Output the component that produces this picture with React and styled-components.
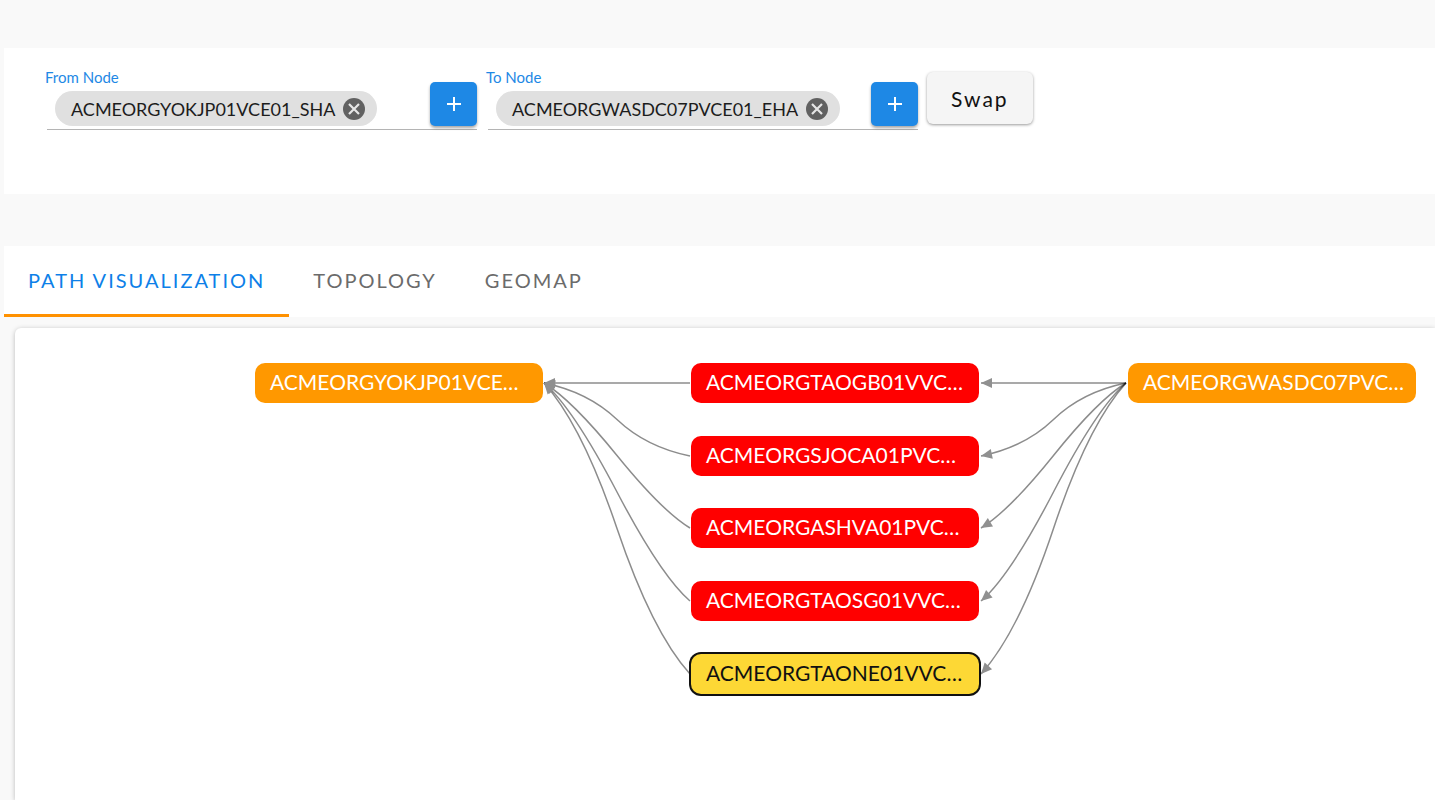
import React from "react";
import styled, { createGlobalStyle } from "styled-components";

const GlobalStyle = createGlobalStyle`
  * {
    box-sizing: border-box;
  }
  body {
    margin: 0;
    background: #f9f9f9;
    color: #1c1c1c;
    font-family: Lato, "Open Sans", sans-serif;
  }
  button,
  input {
    font-family: inherit;
  }
`;

const Page = styled.main`
  display: flex;
  flex-direction: column;
  min-height: 100vh;
  padding: 48px 0 0 4px;
  overflow: hidden;
`;

const SearchBar = styled.form`
  display: flex;
  align-items: flex-start;
  gap: 9px;
  min-height: 146px;
  margin-bottom: 52px;
  padding: 20px 41px;
  background: #fff;
`;

const Field = styled.div`
  flex: 0 1 432px;
  min-width: 0;
`;

const Label = styled.label`
  display: block;
  height: 14px;
  font-size: 15px;
  line-height: 18px;
  color: #1e88e5;
`;

const Control = styled.div`
  display: flex;
  align-items: flex-end;
  height: 48px;
  margin-left: 2px;
  padding: 0 0 3px 8px;
  border-bottom: 1px solid #b4b4b4;
`;

const Chip = styled.span`
  display: flex;
  align-items: center;
  gap: 8px;
  flex: none;
  height: 35px;
  padding: 0 12px 0 16px;
  border-radius: 18px;
  background: #e0e0e0;
  font-size: 18px;
  line-height: 24px;
`;

const ClearButton = styled.button`
  display: flex;
  padding: 0;
  border: 0;
  background: none;
  cursor: pointer;
`;

const NodeInput = styled.input`
  flex: 1;
  min-width: 0;
  height: 35px;
  border: 0;
  outline: 0;
  background: none;
  font-size: 18px;
`;

const AddButton = styled.button`
  display: flex;
  align-items: center;
  justify-content: center;
  flex: none;
  width: 47px;
  height: 44px;
  padding: 0;
  border: 0;
  border-radius: 5px;
  background: #1e88e5;
  box-shadow: 0 2px 3px rgba(0, 0, 0, 0.35);
  cursor: pointer;
`;

const SwapButton = styled.button`
  flex: none;
  height: 52px;
  margin-top: 4px;
  padding: 0 24px;
  border: 0;
  border-radius: 6px;
  background: #f5f5f5;
  box-shadow: 0 1px 3px rgba(0, 0, 0, 0.4);
  color: #111;
  font-size: 21px;
  letter-spacing: 2px;
  cursor: pointer;
`;

const Tabs = styled.nav`
  display: flex;
  height: 71px;
  background: #fff;
`;

const Tab = styled.button`
  padding: 0 24px;
  border: 0;
  border-bottom: 3px solid ${(props) => (props.$active ? "#ff9100" : "transparent")};
  background: none;
  color: ${(props) => (props.$active ? "#0d80e8" : "#6b6b6b")};
  font-size: 20px;
  letter-spacing: 2px;
  cursor: pointer;
`;

const Canvas = styled.section`
  position: relative;
  flex: 1;
  min-height: 400px;
  margin: 11px 0 0 11px;
  border-radius: 6px 0 0 0;
  background: #fff;
  box-shadow: 0 1px 5px rgba(0, 0, 0, 0.25);
  overflow: hidden;
`;

const Edges = styled.svg`
  position: absolute;
  top: 0;
  left: 0;
  width: 100%;
  height: 100%;
`;

const GraphNode = styled.div`
  position: absolute;
  top: ${(props) => props.$y}px;
  left: ${(props) => props.$x}px;
  width: 288px;
  height: 40px;
  padding: 0 15px;
  border-radius: 10px;
  background: ${(props) => props.$fill};
  box-shadow: ${(props) => (props.$selected ? "0 0 0 2px #111" : "none")};
  color: ${(props) => (props.$selected ? "#111" : "#fff")};
  font-size: 21px;
  line-height: 38px;
  white-space: nowrap;
`;

const ORANGE = "#ff9800";
const RED = "#ff0000";
const YELLOW = "#fdd835";

const ends = [
  { name: "ACMEORGYOKJP01VCE…", x: 240, y: 35, fill: ORANGE },
  { name: "ACMEORGWASDC07PVC…", x: 1113, y: 35, fill: ORANGE },
];

// bend is the offset of the curve's control points from each end
const hops = [
  { name: "ACMEORGTAOGB01VVC…", x: 676, y: 35, fill: RED, bend: [36, 0] },
  { name: "ACMEORGSJOCA01PVC…", x: 676, y: 108, fill: RED, bend: [44, 9] },
  { name: "ACMEORGASHVA01PVC…", x: 676, y: 180, fill: RED, bend: [28, 17] },
  { name: "ACMEORGTAOSG01VVC…", x: 676, y: 253, fill: RED, bend: [29, 25] },
  {
    name: "ACMEORGTAONE01VVC…",
    x: 676,
    y: 326,
    fill: YELLOW,
    bend: [38, 42],
    selected: true,
  },
];

function makeEdge(from, to, [bx, by]) {
  const dir = Math.sign(to.y - from.y);
  const mid = { x: (from.x + to.x) / 2, y: (from.y + to.y) / 2 };
  const c1 = { x: from.x - bx, y: from.y + dir * by };
  const c2 = { x: to.x + bx, y: to.y - dir * by };
  return {
    d: `M${from.x} ${from.y} Q${c1.x} ${c1.y} ${mid.x} ${mid.y} Q${c2.x} ${c2.y} ${to.x} ${to.y}`,
    tip: to,
    angle: (Math.atan2(to.y - c2.y, to.x - c2.x) * 180) / Math.PI,
  };
}

const edges = hops.flatMap((hop) => {
  const y = hop.y + 20;
  return [
    makeEdge({ x: 675, y }, { x: 529, y: 55 }, hop.bend),
    makeEdge({ x: 1111, y: 55 }, { x: 966, y }, hop.bend),
  ];
});

function NodeField({ id, label, value }) {
  return (
    <Field>
      <Label htmlFor={id}>{label}</Label>
      <Control>
        <Chip>
          {value}
          <ClearButton type="button" aria-label={`Remove ${value}`}>
            <svg width="22" height="22" viewBox="0 0 22 22">
              <circle cx="11" cy="11" r="11" fill="#616161" />
              <path
                d="M6 6l10 10M16 6l-10 10"
                stroke="#e6e6e6"
                strokeWidth="2.2"
              />
            </svg>
          </ClearButton>
        </Chip>
        <NodeInput id={id} type="text" />
        <AddButton type="button" aria-label={`Add ${label}`}>
          <svg width="14" height="14" viewBox="0 0 14 14">
            <path d="M7 0v14M0 7h14" stroke="#fff" strokeWidth="2" />
          </svg>
        </AddButton>
      </Control>
    </Field>
  );
}

function PathGraph() {
  return (
    <Canvas>
      <Edges>
        {edges.map((edge) => (
          <path
            key={edge.d}
            d={edge.d}
            fill="none"
            stroke="#000"
            strokeOpacity="0.45"
            strokeWidth="1.5"
          />
        ))}
        {edges.map((edge) => (
          <path
            key={edge.d}
            d="M0 0L-11 -5V5Z"
            fill="#909090"
            transform={`translate(${edge.tip.x} ${edge.tip.y}) rotate(${edge.angle})`}
          />
        ))}
      </Edges>
      {[...ends, ...hops].map((node) => (
        <GraphNode
          key={node.name}
          $x={node.x}
          $y={node.y}
          $fill={node.fill}
          $selected={node.selected}
        >
          {node.name}
        </GraphNode>
      ))}
    </Canvas>
  );
}

function App() {
  return (
    <>
      <GlobalStyle />
      <Page>
        <SearchBar>
          <NodeField
            id="from-node"
            label="From Node"
            value="ACMEORGYOKJP01VCE01_SHA"
          />
          <NodeField
            id="to-node"
            label="To Node"
            value="ACMEORGWASDC07PVCE01_EHA"
          />
          <SwapButton type="button">Swap</SwapButton>
        </SearchBar>
        <Tabs>
          <Tab type="button" $active>
            PATH VISUALIZATION
          </Tab>
          <Tab type="button">TOPOLOGY</Tab>
          <Tab type="button">GEOMAP</Tab>
        </Tabs>
        <PathGraph />
      </Page>
    </>
  );
}

export default App;
